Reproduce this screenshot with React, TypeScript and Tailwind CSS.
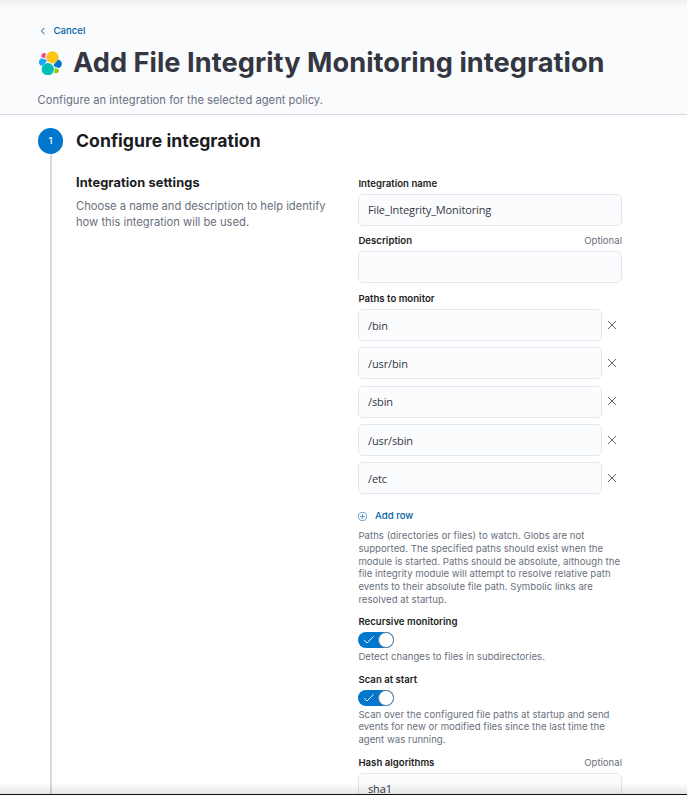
import React from "react";

const paths = ["/bin", "/usr/bin", "/sbin", "/usr/sbin", "/etc"];

function ElasticLogo() {
  return (
    <svg className="mt-[0.5px] h-6 w-6 shrink-0" viewBox="0 0 24 24">
      <circle cx="14.4" cy="6.3" r="6.1" fill="#fec514" />
      <circle cx="9.8" cy="18.2" r="6.1" fill="#00bfb3" />
      <path d="M3.8 3.4C5 1.8 7 1.7 8.1 2.7C7.4 4.2 7.2 5.6 7.4 7.4L3.4 6C3 5.2 3.2 4.2 3.8 3.4Z" fill="#f04e98" />
      <path d="M3.8 7.2L8.6 9.1C8.9 9.6 8.7 10.4 8.2 11L4.4 15.1C2.2 14.6.9 13 .9 11.2C.9 9.3 2 7.7 3.8 7.2Z" fill="#1ba9f5" />
      <path d="M20.4 8.6C22.6 9.2 23.8 10.9 23.8 12.9C23.8 14.8 22.6 16.5 20.7 17.1L16.3 15.5C15.6 14.6 15.7 13.5 16.3 12.7Z" fill="#0077cc" />
      <path d="M16.9 16.9L20.6 18.3C21.3 19.4 21.1 20.8 20.1 21.6C18.9 22.5 17 22.3 15.9 21.4C16.7 20 17 18.5 16.9 16.9Z" fill="#93c90e" />
    </svg>
  );
}

function Cross() {
  return (
    <svg className="mb-[1px] ml-[5px] h-[10px] w-[10px]" viewBox="0 0 10 10" fill="none" stroke="#4d525c" strokeWidth="0.9">
      <path d="M1 1l8 8M9 1L1 9" />
    </svg>
  );
}

function Label({ text, optional }: { text: string; optional?: boolean }) {
  return (
    <div className="flex h-[13px] items-center justify-between whitespace-nowrap pl-[0.4px] text-[9.6px] leading-[13px]">
      <span className="font-semibold tracking-[0.02px] text-[#1a1c21]">{text}</span>
      {optional && <span className="text-[#69707d]">Optional</span>}
    </div>
  );
}

const fieldClass =
  "flex h-8 items-center rounded-[5px] border border-[#e4e7f0] bg-[#fbfcfd] px-[9px] pt-[1px] font-['Open_Sans','Noto_Sans',sans-serif] text-[11px] tracking-[-0.12px] text-[#343741]";

function Toggle() {
  return (
    <div className="flex h-4 w-9 items-center justify-between rounded-full bg-[#0077cc]">
      <svg className="ml-[5px] h-[10px] w-3" viewBox="0 0 12 10" fill="none" stroke="#fff" strokeWidth="0.9">
        <path d="M1 5.2L4 8L10.5 1.4" />
      </svg>
      <div className="h-4 w-4 rounded-full border border-[#69859f] bg-white" />
    </div>
  );
}

function HelpLines({ lines }: { lines: string[] }) {
  return (
    <div className="whitespace-nowrap pl-[0.4px] text-[9.6px] leading-[12.8px] tracking-[0.03px] text-[#69707d]">
      {lines.map((l) => (
        <div key={l}>{l}</div>
      ))}
    </div>
  );
}

export default function App() {
  return (
    <div className="relative h-[795px] w-[687px] overflow-hidden bg-white font-['Inter',sans-serif] text-[#343741]">
      <header className="h-[115px] border-b border-[#d3dae6] bg-[#fafbfd] pl-[37.5px] pt-[24px]">
        <div className="flex h-[13px] items-center text-[9.6px] font-medium text-[#0061a6]">
          <svg className="ml-[2px] h-2 w-[6px]" viewBox="0 0 6 8" fill="none" stroke="#0061a6" strokeWidth="1">
            <path d="M4.5 .8L1.4 4L4.5 7.2" />
          </svg>
          <span className="ml-[8px] pt-[1.4px]">Cancel</span>
        </div>
        <div className="mt-[9px] flex h-[34px] items-center">
          <ElasticLogo />
          <h1 className="ml-[11.5px] whitespace-nowrap text-[27.2px] font-bold leading-[34px] tracking-[0.04px]">
            Add File Integrity Monitoring integration
          </h1>
        </div>
        <p className="mt-[12px] whitespace-nowrap text-[11.2px] leading-4 tracking-[0.02px] text-[#69707d]">
          Configure an integration for the selected agent policy.
        </p>
      </header>
      <main className="flex h-[680px] pl-[38px] pt-[13px]">
        <div className="flex w-[25px] shrink-0 flex-col items-center">
          <div className="flex h-[26px] w-[25px] shrink-0 items-center justify-center rounded-full bg-[#0077cc] pt-px text-[9.6px] font-medium text-white">
            1
          </div>
          <div className="w-[2px] flex-1 bg-[#d3dae6]" />
        </div>
        <div className="ml-[13px] w-[546px] shrink-0">
          <h2 className="whitespace-nowrap text-[17.6px] font-bold leading-[26px] tracking-[0.04px] text-[#1a1c21]">
            Configure integration
          </h2>
          <div className="mt-[19px] flex">
            <section className="w-[282px] shrink-0 whitespace-nowrap">
              <h3 className="text-[12.8px] font-bold leading-[20px] tracking-[0.1px] text-[#1a1c21]">Integration settings</h3>
              <p className="mt-[5px] text-[11.2px] leading-4 text-[#69707d]">
                Choose a name and description to help identify
                <br />
                how this integration will be used.
              </p>
            </section>
            <section className="w-[264px] shrink-0 pt-[4px]">
              <Label text="Integration name" />
              <div className={fieldClass + " mt-[4px]"}>File_Integrity_Monitoring</div>
              <div className="mt-[8px]">
                <Label text="Description" optional />
              </div>
              <div className={fieldClass + " mt-[4px]"} />
              <div className="mt-[9px]">
                <Label text="Paths to monitor" />
              </div>
              <div className="mt-[4.1px] flex flex-col gap-[6.35px]">
                {paths.map((p) => (
                  <div key={p} className="flex items-center">
                    <div className={fieldClass + " w-[244px]"}>
                      <span className="pt-[0.4px]">{p}</span>
                    </div>
                    <Cross />
                  </div>
                ))}
              </div>
              <div className="mt-[14.5px] flex h-[13px] items-center text-[9.6px] font-medium text-[#0061a6]">
                <svg className="mt-[2px] h-[9px] w-[9px]" viewBox="0 0 9 9" fill="none" stroke="#2b7ab8" strokeWidth="0.7">
                  <circle cx="4.5" cy="4.5" r="4.1" />
                  <path d="M4.5 2v5M2 4.5h5" />
                </svg>
                <span className="ml-[8px] pt-[1.6px]">Add row</span>
              </div>
              <div className="mb-[-1px] mt-[8px]">
                <HelpLines
                  lines={[
                    "Paths (directories or files) to watch. Globs are not",
                    "supported. The specified paths should exist when the",
                    "module is started. Paths should be absolute, although the",
                    "file integrity module will attempt to resolve relative path",
                    "events to their absolute file path. Symbolic links are",
                    "resolved at startup.",
                  ]}
                />
              </div>
              <div className="mb-[4px] mt-[9px]">
                <Label text="Recursive monitoring" />
              </div>
              <Toggle />
              <div className="mb-[-1px] mt-[3px]">
                <HelpLines lines={["Detect changes to files in subdirectories."]} />
              </div>
              <div className="mb-[4px] mt-[10px]">
                <Label text="Scan at start" />
              </div>
              <Toggle />
              <div className="mb-[-1px] mt-[3px]">
                <HelpLines
                  lines={[
                    "Scan over the configured file paths at startup and send",
                    "events for new or modified files since the last time the",
                    "agent was running.",
                  ]}
                />
              </div>
              <div className="mb-[4px] mt-[10px]">
                <Label text="Hash algorithms" optional />
              </div>
              <div className={fieldClass}>
                <span className="leading-[12px]">sha1</span>
              </div>
            </section>
          </div>
        </div>
      </main>
      <div className="absolute inset-x-0 top-0 h-2 bg-gradient-to-b from-black/5 to-transparent" />
      <div className="absolute inset-x-0 bottom-0 h-3 border-b border-[#111] bg-gradient-to-b from-transparent to-black/10" />
    </div>
  );
}
